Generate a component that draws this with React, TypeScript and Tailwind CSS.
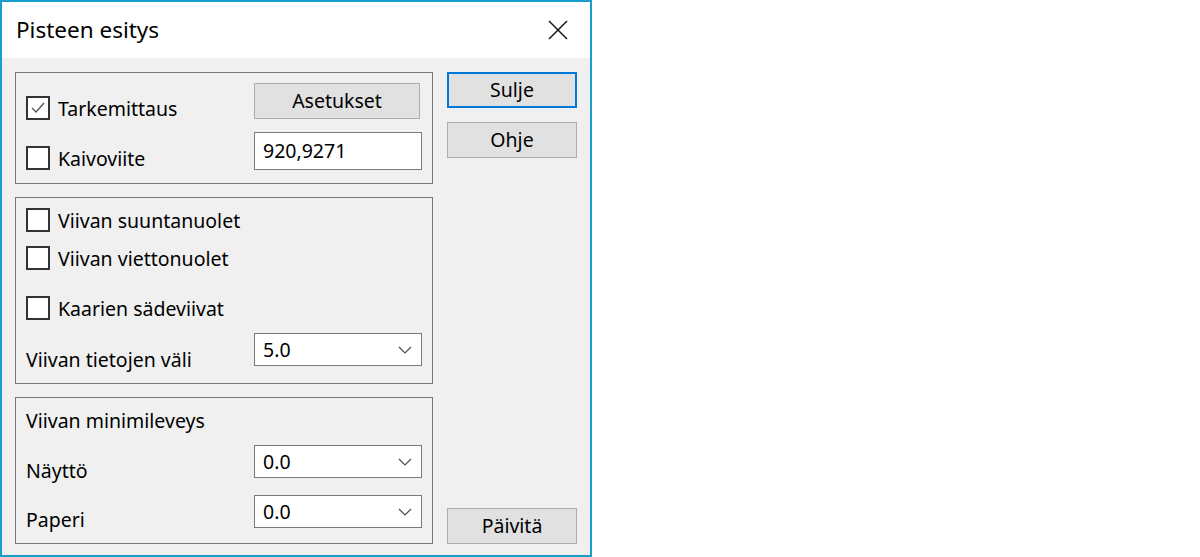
import React from 'react';

const font = { fontFamily: '"Noto Sans", "Open Sans", sans-serif' };

function Checkbox({ label, checked = false }: { label: string; checked?: boolean }) {
  return (
    <div className="flex items-center h-[24px]">
      <div className="w-[24px] h-[24px] border-2 border-[#333333] bg-white flex items-center justify-center shrink-0">
        {checked && (
          <svg width="16" height="16" viewBox="0 0 16 16">
            <polyline points="2,8 6,12 14,3" fill="none" stroke="#555555" strokeWidth="1.3" />
          </svg>
        )}
      </div>
      <span className="ml-[8px] mt-[2px] text-[19.5px] leading-[24px] text-black">{label}</span>
    </div>
  );
}

function Chevron() {
  return (
    <svg width="14" height="8" viewBox="0 0 14 8" className="shrink-0">
      <polyline points="1,1 7,7 13,1" fill="none" stroke="#4d4d4d" strokeWidth="1.2" />
    </svg>
  );
}

function Combo({ value }: { value: string }) {
  return (
    <div className="w-[168px] h-[33px] bg-white border border-[#7a7a7a] flex items-center justify-between pl-[8px] pr-[9px] shrink-0">
      <span className="text-[19.5px] leading-[24px]">{value}</span>
      <Chevron />
    </div>
  );
}

function Button({ label, primary = false, className = '' }: { label: string; primary?: boolean; className?: string }) {
  return (
    <div
      className={`h-[36px] bg-[#e1e1e1] flex items-center justify-center text-[19.5px] leading-[24px] ${
        primary ? 'border-2 border-[#0078d7]' : 'border border-[#adadad]'
      } ${className}`}
    >
      {label}
    </div>
  );
}

export default function App() {
  return (
    <div className="w-[1200px] h-[557px] bg-white flex text-black" style={font}>
      <div className="w-[592px] h-[557px] border-2 border-[#1a9fcb] flex flex-col bg-[#f0f0f0]">
        {/* title bar */}
        <div className="h-[56px] bg-white flex items-center justify-between pl-[14px] pr-[22px] shrink-0">
          <span className="text-[22.5px] leading-[28px]">Pisteen esitys</span>
          <svg width="20" height="20" viewBox="0 0 20 20">
            <line x1="1" y1="1" x2="19" y2="19" stroke="#111111" strokeWidth="1.4" />
            <line x1="19" y1="1" x2="1" y2="19" stroke="#111111" strokeWidth="1.4" />
          </svg>
        </div>

        {/* body */}
        <div className="flex flex-1 pt-[14px] pl-[13px] pb-[11px] gap-[14px]">
          <div className="flex flex-col w-[418px] gap-[13px]">
            {/* group 1 */}
            <div className="h-[112px] shrink-0 border border-[#767676] flex justify-between pl-[10px] pr-[10px]">
              <div className="flex flex-col pt-[23px] gap-[26px]">
                <Checkbox label="Tarkemittaus" checked />
                <Checkbox label="Kaivoviite" />
              </div>
              <div className="flex flex-col w-[168px] pt-[10px] gap-[13px]">
                <Button label="Asetukset" className="w-[166px]" />
                <div className="w-[168px] h-[38px] bg-white border border-[#7a7a7a] flex items-center pl-[8px] text-[19.5px] leading-[24px]">
                  920,9271
                </div>
              </div>
            </div>

            {/* group 2 */}
            <div className="h-[187px] shrink-0 border border-[#767676] flex flex-col pl-[10px] pr-[10px] pt-[10px]">
              <Checkbox label="Viivan suuntanuolet" />
              <div className="mt-[14px]">
                <Checkbox label="Viivan viettonuolet" />
              </div>
              <div className="mt-[26px]">
                <Checkbox label="Kaarien sädeviivat" />
              </div>
              <div className="mt-[13px] h-[33px] flex items-start justify-between">
                <span className="mt-[15px] text-[19.5px] leading-[24px]">Viivan tietojen väli</span>
                <Combo value="5.0" />
              </div>
            </div>

            {/* group 3 */}
            <div className="flex-1 border border-[#767676] flex flex-col pl-[10px] pr-[10px] pt-[11px]">
              <span className="text-[19.5px] leading-[24px]">Viivan minimileveys</span>
              <div className="mt-[12px] h-[33px] flex items-start justify-between">
                <span className="mt-[14px] text-[19.5px] leading-[24px]">Näyttö</span>
                <Combo value="0.0" />
              </div>
              <div className="mt-[17px] h-[33px] flex items-start justify-between">
                <span className="mt-[13px] text-[19.5px] leading-[24px]">Paperi</span>
                <Combo value="0.0" />
              </div>
            </div>
          </div>

          {/* right buttons */}
          <div className="flex flex-col w-[130px]">
            <Button label="Sulje" primary />
            <Button label="Ohje" className="mt-[14px]" />
            <div className="flex-1" />
            <Button label="Päivitä" />
          </div>
        </div>
      </div>
    </div>
  );
}
